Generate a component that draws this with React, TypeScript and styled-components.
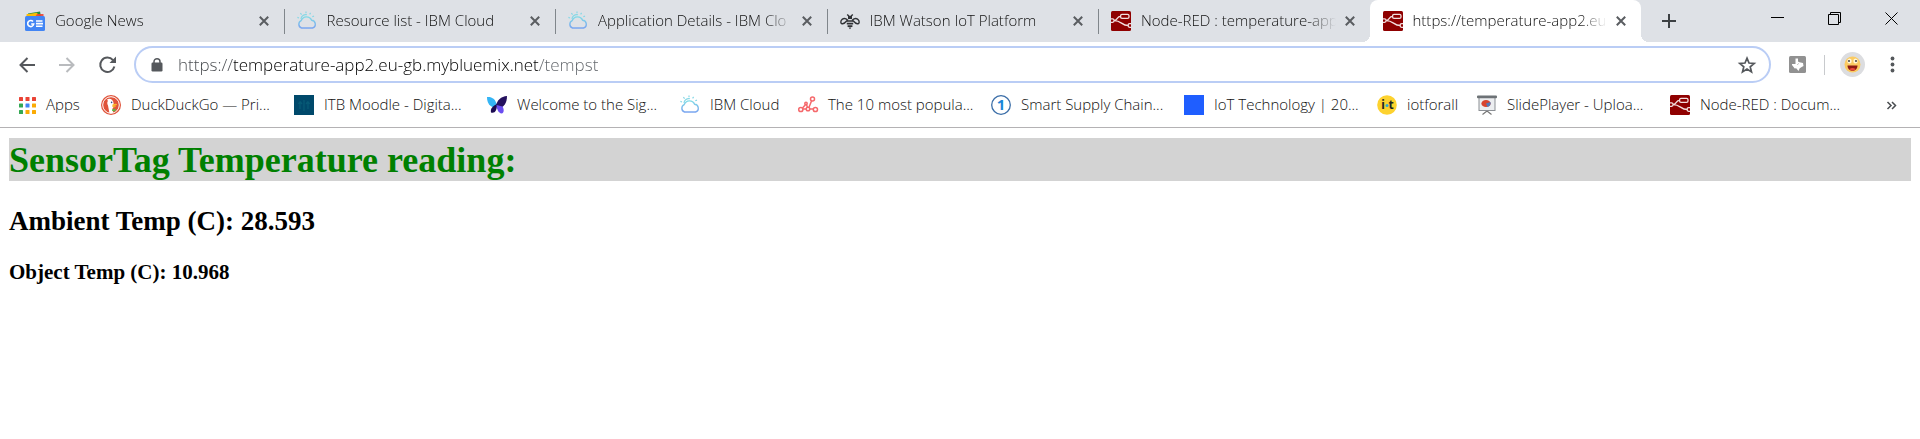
import React from "react";
import styled, { createGlobalStyle } from "styled-components";

const uiFont = `"Open Sans", "Noto Sans", sans-serif`;

const GlobalStyle = createGlobalStyle`
  *, *::before, *::after { box-sizing: border-box; }
  body { margin: 0; background: #fff; }
  button { border: 0; padding: 0; background: none; color: inherit; font: inherit; }
  svg { display: block; flex: none; }
`;

const TabStrip = styled.header`
  display: flex;
  height: 42px;
  padding-left: 12px;
  background: #dee1e6;
  color: #111;
  font: 300 15px/20px ${uiFont};
`;

const TabList = styled.div`
  display: flex;
  flex: 0 1 1629px;
  min-width: 0;
`;

const TabItem = styled.div<{ $active?: boolean }>`
  position: relative;
  display: flex;
  flex: 1 1 0;
  min-width: 0;
  align-items: center;
  padding: 0 12px 0 13px;
  background: ${(p) => (p.$active ? "#fff" : "transparent")};
  border-radius: ${(p) => (p.$active ? "8px 8px 0 0" : "0")};

  &::before,
  &::after {
    content: ${(p) => (p.$active ? '""' : "none")};
    position: absolute;
    bottom: 0;
    width: 8px;
    height: 8px;
  }
  &::before {
    right: 100%;
    background: radial-gradient(circle at 0 0, transparent 8px, #fff 8px);
  }
  &::after {
    left: 100%;
    background: radial-gradient(circle at 100% 0, transparent 8px, #fff 8px);
  }
`;

const Divider = styled.span`
  position: absolute;
  left: 0;
  top: 9px;
  width: 1px;
  height: 25px;
  background: #80868b;
`;

const TabTitle = styled.span`
  flex: 1;
  min-width: 0;
  margin: 0 6px 0 10px;
  padding-bottom: 2px;
  overflow: hidden;
  white-space: nowrap;
  mask-image: linear-gradient(to right, #000 calc(100% - 28px), transparent);
`;

const IconButton = styled.button<{ $size: number }>`
  display: flex;
  flex: none;
  align-items: center;
  justify-content: center;
  width: ${(p) => p.$size}px;
  height: ${(p) => p.$size}px;
`;

const NewTab = styled(IconButton)`
  margin: 5px 0 0 12px;
`;

const WindowControls = styled.div`
  display: flex;
  margin-left: auto;
`;

const WindowButton = styled.button`
  display: flex;
  align-items: center;
  justify-content: center;
  width: 57px;
  height: 37px;
`;

const Toolbar = styled.nav`
  display: flex;
  align-items: center;
  height: 45px;
  padding: 0 12px 0 11px;
  color: #5f6368;
`;

const NavButtons = styled.div`
  display: flex;
  gap: 8px;
  margin-right: 11px;
`;

const Omnibox = styled.form`
  display: flex;
  flex: 1;
  align-items: center;
  height: 37px;
  padding: 0 12px 0 13px;
  border: 2px solid #bacdf5;
  border-radius: 19px;
`;

const UrlInput = styled.input`
  flex: 1;
  min-width: 0;
  height: 28px;
  margin-left: 13px;
  padding: 0;
  border: 0;
  outline: 0;
  color: transparent;
  background: linear-gradient(to right, #44474b 56px, #000 56px, #000 361px, #5f6368 361px);
  background-clip: text;
  font: 300 17px/28px ${uiFont};
`;

const ToolbarEnd = styled.div`
  display: flex;
  align-items: center;
  margin-left: 17px;
`;

const ToolbarRule = styled.span`
  width: 1px;
  height: 20px;
  margin: 0 15px 0 18px;
  background: #c8cacd;
`;

const MenuButton = styled(IconButton)`
  margin-left: 11px;
`;

const BookmarkBar = styled.nav`
  display: flex;
  align-items: center;
  height: 41px;
  padding: 0 15px 4px 19px;
  border-bottom: 1px solid #b4b2b4;
  color: #111;
  font: 300 15px/20px ${uiFont};
`;

const Bookmark = styled.a<{ $width: number }>`
  display: flex;
  flex: 0 1 ${(p) => p.$width}px;
  min-width: 0;
  gap: 10px;
  align-items: center;
  color: inherit;
  text-decoration: none;
  white-space: nowrap;
`;

const BookmarkLabel = styled.span`
  padding-bottom: 2px;
`;

const Overflow = styled(IconButton)`
  margin-left: auto;
`;

const Page = styled.main`
  padding: 10px 9px;
  color: #000;
  font-family: "Liberation Serif", serif;
`;

const Title = styled.h1`
  margin: 0;
  padding-top: 2px;
  background: #d3d3d3;
  color: #008000;
  font-size: 36px;
  line-height: 41px;
`;

const Ambient = styled.h2`
  margin: 24px 0 0;
  font-size: 27px;
  line-height: 32px;
`;

const ObjectTemp = styled.h3`
  margin: 23px 0 0;
  font-size: 21px;
  line-height: 24px;
`;

const Svg = ({ size = 20, box = 20, children }: { size?: number; box?: number; children: React.ReactNode }) => (
  <svg width={size} height={size} viewBox={`0 0 ${box} ${box}`} fill="none" aria-hidden="true" focusable="false" overflow="visible">
    {children}
  </svg>
);

const NewsIcon = () => (
  <Svg>
    <path d="M3 2.500 15 .6l1 5H3z" fill="#1e8e3e" />
    <path d="M1.500 3.200 12 1.800l3 5H1.500z" fill="#fbbc04" />
    <path d="M8 3h10.500v5H8z" fill="#ea4335" opacity=".9" />
    <path d="M2 3h10l-2 3H2z" fill="#fbbc04" />
    <rect y="5" width="20" height="15" rx="1.500" fill="#4285f4" />
    <path d="M8 10.600A3 3 0 1 0 8.700 13H6.200M11 10h6.500M11 12.600h7M11 15.200h6.500" stroke="#fff" strokeWidth="1.600" />
  </Svg>
);

const CloudIcon = () => (
  <Svg>
    <defs>
      <linearGradient id="cloud" x1="0" y1="0" x2="0" y2="1">
        <stop offset="0" stopColor="#7fdbe6" />
        <stop offset="1" stopColor="#7aa5f0" />
      </linearGradient>
    </defs>
    <path d="M4.500 17a4 4 0 0 1-.3-7.400 5.600 5.600 0 0 1 10.400-.4A4 4 0 0 1 15.500 17z" stroke="url(#cloud)" strokeWidth="1.400" />
    <path d="M4 8a4.600 4.600 0 0 1 6-4.200M9 2.200V.4M12.600 3.400l1-1.500M4.600 3.600 3.400 2.200M2 7 .4 6.400M15.300 5.800l1.700-.7" stroke="#86d8e6" strokeWidth="1.200" />
  </Svg>
);

const BeeIcon = () => (
  <Svg>
    <g stroke="#303236" strokeWidth="1.400">
      <path d="M7.500 9C5.500 7 2.500 7 1.200 9.500.4 11.500 1 13 2.600 12.800 4.800 12.500 6 10.600 7.500 9zM12.500 9c2-2 5-2 6.300.5.8 2 .2 3.500-1.400 3.300-2.200-.3-3.400-2.200-4.900-3.800z" />
      <path d="M7 10h6M6.800 12.600h6.400M7.600 15.200h4.800" strokeWidth="1.700" />
      <path d="M7.200 3.400 8.800 5M12.800 3.400 11.200 5" />
    </g>
    <path d="M8 4.800h4v3.200H8zM8.600 16.500h2.800L10 18.200z" fill="#303236" />
  </Svg>
);

const NodeRedIcon = () => (
  <Svg>
    <rect width="20" height="20" rx="1.500" fill="#8f0000" />
    <g stroke="#f3dede" strokeWidth="1.300">
      <rect x="9.600" y="3.400" width="8.400" height="4" rx="1.400" />
      <path d="M9.600 5.400c-4 0-3 4.200-6.600 4.200M3 9.600c8 0 7 4.900 14.400 4.900" />
      <path d="M0 7.800h1.600c2 0 2 3.600 0 3.600H0M20 12.700h-1.400c-2 0-2 3.600 0 3.600H20" />
    </g>
  </Svg>
);

const AppsIcon = () => {
  const colors = ["#ea4335", "#ea4335", "#ea4335", "#34a853", "#4285f4", "#fbab04", "#34a853", "#fbab04", "#fbab04"];
  return (
    <Svg size={17} box={17}>
      {colors.map((c, i) => (
        <rect key={i} x={(i % 3) * 6.5} y={Math.floor(i / 3) * 6.5} width="4" height="4" rx=".5" fill={c} />
      ))}
    </Svg>
  );
};

const DuckIcon = () => (
  <Svg>
    <circle cx="10" cy="10" r="10" fill="#e0533a" />
    <circle cx="10" cy="10" r="8.300" fill="#e0533a" stroke="#fff" strokeWidth="1" />
    <path d="M6 4.400c3-1.600 6.400.4 6.600 4l.2 3.400-1.400 2 .8 4c-1.600.5-3 .4-3.800.1L7 10.600C6 8.600 6 7 7 6z" fill="#fff" />
    <path d="M11.400 9.600c2-1 4.400-.9 4.600-.2.1.9-2 1.200-3.200 1.600 1 .4 2.200 0 2.200.6-.3.9-2.800 1-3.600.3z" fill="#fbb72d" />
    <path d="M11 14.600l3.400-1v3l-3.200-.6z" fill="#5bb947" />
    <circle cx="10.600" cy="7.400" r=".8" fill="#2d4f8e" />
  </Svg>
);

const MoodleIcon = () => (
  <Svg>
    <rect width="20" height="20" fill="#00496b" />
    <path d="M6 6.500 4.500 9M6 6.500 8 9M6 6.500V14M10 5v11M14 6.500V14M14 6.500 12 9M14 6.500l1.600 2.500" stroke="#075a76" strokeWidth="1.300" />
  </Svg>
);

const ButterflyIcon = () => (
  <Svg>
    <path d="M0 2c5-.4 9 2 10 9l-2 2C2.600 11.600 0 8 0 2z" fill="#35b5f5" />
    <path d="M20 1c-6 .6-10 4-11 10l2 3c6-1.600 9-6 9-13z" fill="#24105e" />
    <path d="M10 9c-4 2-7 4.500-6 8.500 4 1 6-2 6-8.500z" fill="#1b0a52" />
    <path d="M9.500 10c.5 5 2 8 5 8.400 3-.6 2.500-4.400 1-7z" fill="#6b4df0" />
  </Svg>
);

const NetworkIcon = () => (
  <Svg>
    <g stroke="#f5696c" strokeWidth="1.500">
      <circle cx="14.500" cy="4" r="2" />
      <circle cx="2.800" cy="14.500" r="2.100" />
      <circle cx="10" cy="14" r="1.800" />
      <circle cx="17.400" cy="14.500" r="2.100" />
      <circle cx="8" cy="8.500" r="1.200" />
      <path d="M13.500 6 11 12.300M4.900 14h3.300M11.800 14h3.500M7.400 9.800 4.500 13M8.600 9.800l.8 2.400" />
    </g>
  </Svg>
);

const IconText = styled.text`
  font-family: "Noto Sans", sans-serif;
  font-weight: 700;
  text-anchor: middle;
`;

const OneIcon = () => (
  <Svg>
    <circle cx="10" cy="10" r="9.300" fill="#fff" stroke="#3b6ea8" strokeWidth="1.300" />
    <IconText x="10" y="15" fontSize="15" fill="#1a86d8">1</IconText>
  </Svg>
);

const BlueIcon = () => (
  <Svg>
    <rect width="20" height="20" fill="#1f5eff" />
  </Svg>
);

const IotIcon = () => (
  <Svg>
    <circle cx="10" cy="10" r="9.800" fill="#fdd22f" />
    <IconText x="6" y="14" fontSize="12" fill="#222">i</IconText>
    <circle cx="10" cy="10.500" r="1.500" fill="#2aa7d8" />
    <IconText x="14" y="14" fontSize="12" fill="#222">t</IconText>
  </Svg>
);

const SlideIcon = () => (
  <Svg>
    <path d="M10 15v2M10 16l-4.500 3.500M10 16l4.500 3.500" stroke="#777" strokeWidth="1.200" />
    <rect x="2" y="2.500" width="16" height="13" fill="#eceef0" stroke="#8b8f94" />
    <rect x="0" y=".5" width="20" height="2.800" rx="1" fill="#6d7276" />
    <ellipse cx="9" cy="8.500" rx="4.600" ry="3.600" fill="#d9442f" />
    <path d="M9 8.500 13.500 7c.6 2-.5 4.500-3 5z" fill="#5279b8" />
  </Svg>
);

const CloseIcon = () => (
  <Svg size={10} box={10}>
    <path d="M.8.8l8.400 8.400M9.200.8.8 9.200" stroke="#5a5d61" strokeWidth="2" />
  </Svg>
);

const tabs = [
  { title: "Google News", Icon: NewsIcon },
  { title: "Resource list - IBM Cloud", Icon: CloudIcon },
  { title: "Application Details - IBM Clo", Icon: CloudIcon },
  { title: "IBM Watson IoT Platform", Icon: BeeIcon },
  { title: "Node-RED : temperature-app", Icon: NodeRedIcon },
  { title: "https://temperature-app2.eu", Icon: NodeRedIcon },
];

const bookmarks = [
  { label: "Apps", width: 82, Icon: AppsIcon },
  { label: "DuckDuckGo — Pri...", width: 193, Icon: DuckIcon },
  { label: "ITB Moodle - Digita...", width: 193, Icon: MoodleIcon },
  { label: "Welcome to the Sig...", width: 193, Icon: ButterflyIcon },
  { label: "IBM Cloud", width: 118, Icon: CloudIcon },
  { label: "The 10 most popula...", width: 193, Icon: NetworkIcon },
  { label: "Smart Supply Chain...", width: 193, Icon: OneIcon },
  { label: "IoT Technology | 20...", width: 193, Icon: BlueIcon },
  { label: "iotforall", width: 100, Icon: IotIcon },
  { label: "SlidePlayer - Uploa...", width: 193, Icon: SlideIcon },
  { label: "Node-RED : Docum...", width: 193, Icon: NodeRedIcon },
];

export default function App() {
  return (
    <>
      <GlobalStyle />
      <TabStrip>
        <TabList role="tablist">
          {tabs.map(({ title, Icon }, i) => {
            const active = i === tabs.length - 1;
            return (
              <TabItem key={title} role="tab" aria-selected={active} $active={active}>
                {i > 0 && !active && <Divider />}
                <Icon />
                <TabTitle>{title}</TabTitle>
                <IconButton $size={16} aria-label={`Close ${title}`}>
                  <CloseIcon />
                </IconButton>
              </TabItem>
            );
          })}
        </TabList>
        <NewTab $size={32} aria-label="New tab">
          <Svg size={14} box={14}>
            <path d="M7 0v14M0 7h14" stroke="#3c4043" strokeWidth="2" />
          </Svg>
        </NewTab>
        <WindowControls>
          <WindowButton aria-label="Minimize">
            <Svg size={13} box={13}>
              <path d="M0 5.500h13" stroke="#000" />
            </Svg>
          </WindowButton>
          <WindowButton aria-label="Restore">
            <Svg size={13} box={13}>
              <path d="M.5 2.500h10v10H.5zM2.500 2.500v-2h10v10h-2" stroke="#000" />
            </Svg>
          </WindowButton>
          <WindowButton aria-label="Close window">
            <Svg size={13} box={13}>
              <path d="M.5.5l12 12M12.500.5l-12 12" stroke="#000" />
            </Svg>
          </WindowButton>
        </WindowControls>
      </TabStrip>

      <Toolbar aria-label="Navigation">
        <NavButtons>
          <IconButton $size={32} aria-label="Back">
            <Svg size={16} box={16}>
              <path d="M16 8H1.500M8.500 1 1.500 8l7 7" stroke="#55585c" strokeWidth="2" />
            </Svg>
          </IconButton>
          <IconButton $size={32} aria-label="Forward">
            <Svg size={16} box={16}>
              <path d="M0 8h14.500M7.500 1l7 7-7 7" stroke="#b9bbbe" strokeWidth="2" />
            </Svg>
          </IconButton>
          <IconButton $size={32} aria-label="Reload">
            <Svg size={17} box={17}>
              <path d="M14 4.200A7.200 7.200 0 1 0 15.400 10.500" stroke="#55585c" strokeWidth="2" />
              <path d="M17 .5V7h-6.500z" fill="#55585c" />
            </Svg>
          </IconButton>
        </NavButtons>
        <Omnibox onSubmit={(e) => e.preventDefault()}>
          <Svg size={16} box={16}>
            <rect x="2.500" y="5.500" width="11" height="9" rx="1.200" fill="#55585c" />
            <path d="M5 6.500V4.700a3 3 0 0 1 6 0v1.800" stroke="#55585c" strokeWidth="1.500" />
          </Svg>
          <UrlInput aria-label="Address" spellCheck={false} defaultValue="https://temperature-app2.eu-gb.mybluemix.net/tempst" />
          <IconButton type="button" $size={20} aria-label="Bookmark this page">
            <Svg size={18} box={18}>
              <path d="M9 2.200l2 4.800 5.200.4-4 3.400 1.300 5.100L9 13.100l-4.500 2.800 1.300-5.100-4-3.400L7 7z" stroke="#55585c" strokeWidth="1.700" />
            </Svg>
          </IconButton>
        </Omnibox>
        <ToolbarEnd>
          <IconButton $size={18} aria-label="Extension">
            <Svg size={17} box={17}>
              <rect width="17" height="17" rx="1.500" fill="#919191" />
              <path d="M6.500 2.500h2.500v3l1.500.8 3.500.7.500 3-1.800 1-2 1.200-1.200 2.800-2.300-2.800-1.500.3L3 9V8h3.500z" fill="#fff" />
              <path d="M8.500 8.500l1-.8" stroke="#919191" />
            </Svg>
          </IconButton>
          <ToolbarRule />
          <IconButton $size={25} aria-label="Profile">
            <Svg size={25} box={25}>
              <circle cx="12.500" cy="12.500" r="12.500" fill="#dcdde0" />
              <circle cx="12.500" cy="12.500" r="8" fill="#fbcb62" />
              <ellipse cx="9.500" cy="9" rx="2.200" ry="2.600" fill="#fff6d8" />
              <ellipse cx="15.500" cy="9" rx="2.200" ry="2.600" fill="#fff6d8" />
              <circle cx="9" cy="9" r=".9" fill="#333" />
              <circle cx="16" cy="9" r=".9" fill="#333" />
              <path d="M7.500 13.500h10c0 7-10 7-10 0z" fill="#8e1a12" />
              <path d="M9.500 17c1.500-1.500 4.500-1.500 6 0-1.500 2-4.500 2-6 0z" fill="#ee4a3c" />
            </Svg>
          </IconButton>
          <MenuButton $size={32} aria-label="Menu">
            <Svg size={17} box={17}>
              <circle cx="8.500" cy="2.500" r="1.900" fill="#55585c" />
              <circle cx="8.500" cy="8.500" r="1.900" fill="#55585c" />
              <circle cx="8.500" cy="14.500" r="1.900" fill="#55585c" />
            </Svg>
          </MenuButton>
        </ToolbarEnd>
      </Toolbar>

      <BookmarkBar aria-label="Bookmarks">
        {bookmarks.map(({ label, width, Icon }) => (
          <Bookmark key={label} href="#" $width={width}>
            <Icon />
            <BookmarkLabel>{label}</BookmarkLabel>
          </Bookmark>
        ))}
        <Overflow $size={28} aria-label="More bookmarks">
          <Svg size={9} box={9}>
            <path d="M.5 1 4 4.500.5 8M5 1l3.500 3.500L5 8" stroke="#4a4d51" strokeWidth="1.500" />
          </Svg>
        </Overflow>
      </BookmarkBar>

      <Page>
        <Title>SensorTag Temperature reading:</Title>
        <Ambient>Ambient Temp (C): 28.593</Ambient>
        <ObjectTemp>Object Temp (C): 10.968</ObjectTemp>
      </Page>
    </>
  );
}
